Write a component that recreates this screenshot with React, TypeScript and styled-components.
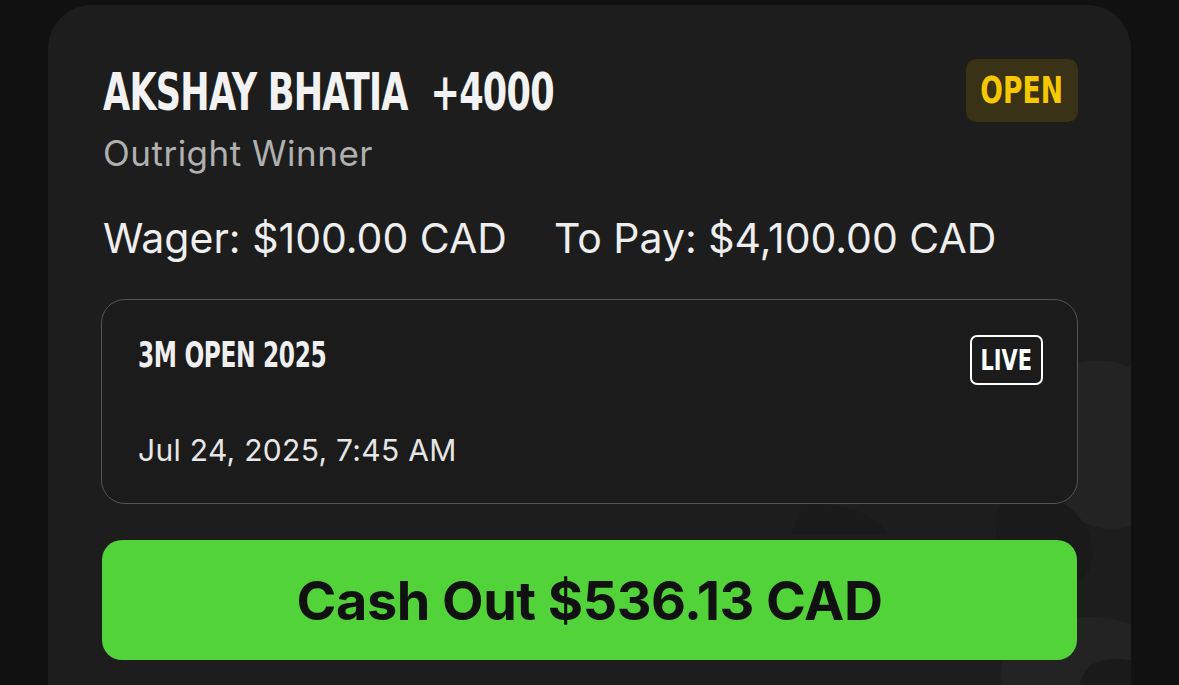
import React from "react";
import styled, { createGlobalStyle } from "styled-components";

const GlobalStyle = createGlobalStyle`
  html, body {
    margin: 0;
    padding: 0;
    background: #111111;
    height: 100%;
    overflow: hidden;
  }
`;

const condensed = `"DejaVu Sans Condensed", "DejaVu Sans", sans-serif`;
const sans = `Inter, "Liberation Sans", sans-serif`;

const Page = styled.div`
  width: 1179px;
  height: 685px;
  padding: 5px 0 0 48px;
  box-sizing: border-box;
  overflow: hidden;
`;

const Card = styled.div`
  position: relative;
  width: 1083px;
  height: 760px;
  background: #1d1d1d;
  border-radius: 44px;
  padding: 54px 53px 0 55px;
  box-sizing: border-box;
  overflow: hidden;
`;

// faint brand mark sitting behind the lower-right of the card
const Watermark = styled.svg`
  position: absolute;
  right: -60px;
  top: 330px;
  width: 420px;
  height: 430px;
  z-index: 0;
`;

const Content = styled.div`
  position: relative;
  z-index: 1;
  display: flex;
  flex-direction: column;
`;

const HeaderRow = styled.div`
  display: flex;
  justify-content: space-between;
  align-items: flex-start;
`;

const TitleBlock = styled.div`
  display: flex;
  flex-direction: column;
  align-items: flex-start;
`;

const Squeezed = styled.span<{ $scale: number; $origin?: string }>`
  display: inline-block;
  transform: scaleX(${(p) => p.$scale});
  transform-origin: ${(p) => p.$origin || "left"} center;
  white-space: pre;
`;

const Title = styled.h1`
  margin: 7px 0 0;
  height: 52px;
  font-family: ${condensed};
  font-weight: 700;
  font-size: 52px;
  line-height: 1;
  color: #f2f2f2;
  letter-spacing: -1px;
`;

const Subtitle = styled.div`
  margin-top: 14px;
  font-family: ${sans};
  font-size: 35px;
  font-weight: 400;
  color: #b0b0b0;
  line-height: 1.2;
  letter-spacing: 0.5px;
`;

const StatusBadge = styled.div`
  background: #3a3217;
  color: #f5c802;
  border-radius: 10px;
  width: 112px;
  height: 63px;
  display: flex;
  align-items: center;
  justify-content: center;
  font-family: ${condensed};
  font-weight: 700;
  font-size: 37px;
`;

const AmountRow = styled.div`
  display: flex;
  gap: 47px;
  margin-top: 40px;
  font-family: ${sans};
  font-size: 41px;
  font-weight: 400;
  color: #eeeeee;
  line-height: 1.2;
`;

const EventBox = styled.div`
  margin-top: 36px;
  margin-left: -2px;
  height: 205px;
  box-sizing: border-box;
  border: 1.5px solid #545454;
  border-radius: 24px;
  background: #1b1b1b;
  padding: 34.5px 34px 0 36px;
  display: flex;
  flex-direction: column;
`;

const EventTop = styled.div`
  display: flex;
  justify-content: space-between;
  align-items: flex-start;
`;

const EventName = styled.div`
  margin-top: 3px;
  font-family: ${condensed};
  font-weight: 700;
  font-size: 35px;
  line-height: 1;
  color: #efefef;
  letter-spacing: -0.5px;
`;

const LiveTag = styled.div`
  width: 73px;
  height: 50px;
  box-sizing: border-box;
  border: 2.5px solid #ffffff;
  border-radius: 7px;
  display: flex;
  align-items: center;
  justify-content: center;
  font-family: ${condensed};
  font-weight: 700;
  font-size: 29px;
  color: #ffffff;
`;

const EventDate = styled.div`
  margin-top: 47px;
  font-family: ${sans};
  font-size: 30px;
  color: #e6e6e6;
  letter-spacing: 0.3px;
`;

const CashOutButton = styled.button`
  margin-top: 36px;
  margin-left: -1px;
  height: 120px;
  width: 975px;
  border: none;
  border-radius: 20px;
  background: #52d33a;
  color: #111111;
  font-family: ${sans};
  font-weight: 700;
  font-size: 54px;
  letter-spacing: -0.5px;
  cursor: pointer;
`;

const App: React.FC = () => {
  return (
    <>
      <GlobalStyle />
      <Page>
        <Card>
          <Watermark viewBox="0 0 420 430">
            <g fill="#232323">
              <path d="M300 30 C 360 10, 420 60, 410 130 C 400 190, 340 210, 300 180 C 280 165, 320 120, 300 90 C 285 65, 270 45, 300 30 Z" />
              <path d="M250 300 C 320 260, 410 290, 420 360 C 428 420, 360 440, 300 420 C 250 400, 200 340, 250 300 Z" />
              <path d="M120 410 C 170 380, 240 400, 250 430 L 100 430 Z" />
            </g>
            <g fill="#1a1a1a">
              <path d="M240 160 C 290 150, 330 190, 320 230 C 310 260, 260 270, 240 240 C 225 215, 215 170, 240 160 Z" />
              <path d="M30 170 C 70 165, 110 180, 115 200 L 20 200 Z" />
              <path d="M320 330 C 360 310, 400 340, 395 380 C 390 410, 350 415, 330 395 C 310 375, 300 345, 320 330 Z" />
            </g>
          </Watermark>
          <Content>
            <HeaderRow>
              <TitleBlock>
                <Title>
                  <Squeezed $scale={0.75}>{"AKSHAY BHATIA  +4000"}</Squeezed>
                </Title>
                <Subtitle>Outright Winner</Subtitle>
              </TitleBlock>
              <StatusBadge>
                <Squeezed $scale={0.8} $origin="center">OPEN</Squeezed>
              </StatusBadge>
            </HeaderRow>
            <AmountRow>
              <span>Wager: $100.00 CAD</span>
              <span>To Pay: $4,100.00 CAD</span>
            </AmountRow>
            <EventBox>
              <EventTop>
                <EventName>
                  <Squeezed $scale={0.74}>3M OPEN 2025</Squeezed>
                </EventName>
                <LiveTag>
                  <Squeezed $scale={0.8} $origin="center">LIVE</Squeezed>
                </LiveTag>
              </EventTop>
              <EventDate>Jul 24, 2025, 7:45 AM</EventDate>
            </EventBox>
            <CashOutButton>Cash Out $536.13 CAD</CashOutButton>
          </Content>
        </Card>
      </Page>
    </>
  );
};

export default App;
